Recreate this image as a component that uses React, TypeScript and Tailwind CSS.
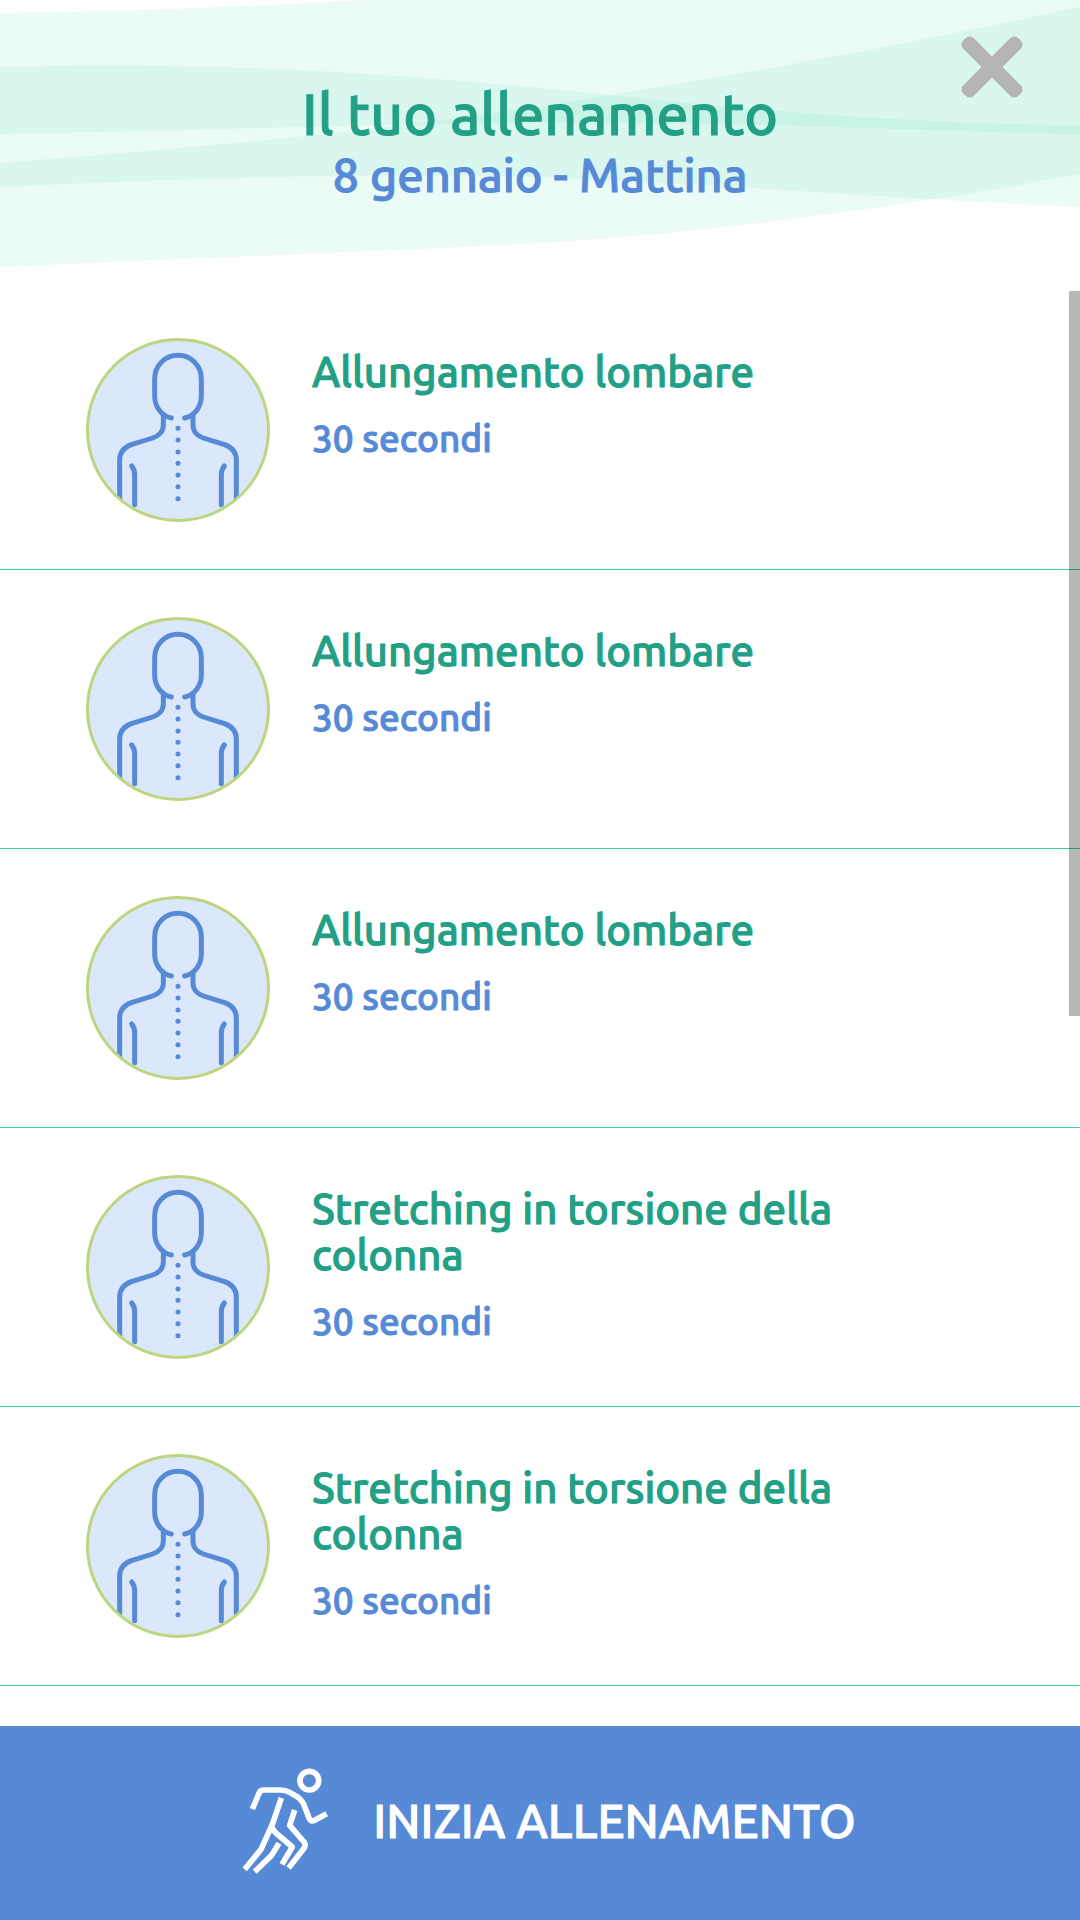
import { useState } from "react";

interface Exercise {
  id: number;
  name: string;
  duration: string;
}

const exercises: Exercise[] = [
  { id: 1, name: "Allungamento lombare", duration: "30 secondi" },
  { id: 2, name: "Allungamento lombare", duration: "30 secondi" },
  { id: 3, name: "Allungamento lombare", duration: "30 secondi" },
  { id: 4, name: "Stretching in torsione della colonna", duration: "30 secondi" },
  { id: 5, name: "Stretching in torsione della colonna", duration: "30 secondi" },
];

// y position of each dot along the spine
const spine = [325, 360, 396, 430, 465, 500, 536];

function Waves() {
  return (
    <svg
      className="absolute inset-x-0 top-0 w-full h-[270px]"
      viewBox="0 0 1080 270"
      preserveAspectRatio="none"
      fill="#3ddcab"
      fillOpacity="0.1"
      aria-hidden="true"
    >
      <path d="M0 13 C115 12 240 7 365 0 H1080 V135 C900 129 720 122 540 122 C360 124 180 131 0 134 Z" />
      <path d="M0 67 C180 62 340 69 540 88 C720 107 900 124 1080 125 V207 C900 199 720 184 540 177 C360 173 180 178 0 187 Z" />
      <path d="M0 163 C180 149 380 132 540 106 C720 79 900 46 1080 7 V174 C900 207 720 232 540 243 C360 253 180 258 0 267 Z" />
    </svg>
  );
}

function CloseIcon() {
  return (
    <svg className="w-16 h-16" viewBox="-32 -32 64 64" fill="#b5b5b5" aria-hidden="true">
      <rect x="-39" y="-7.5" width="78" height="15" rx="5.5" transform="rotate(45)" />
      <rect x="-39" y="-7.5" width="78" height="15" rx="5.5" transform="rotate(-45)" />
    </svg>
  );
}

function BackIcon() {
  return (
    <svg
      className="w-full h-full"
      viewBox="57 63 534 534"
      fill="none"
      stroke="#578ad6"
      strokeWidth="15"
      strokeLinecap="round"
      aria-hidden="true"
    >
      {/* head */}
      <path d="M304 294 C274 288 254 260 254 228 V176 C254 136 286 106 324 106 C362 106 394 136 394 176 V228 C394 260 374 288 344 294" />
      {/* shoulders */}
      <path d="M280 284 V315 C280 334 266 348 248 354 L184 374 C160 383 149 400 149 420 V560" />
      <path d="M369 284 V315 C369 334 382 348 400 354 L464 374 C488 383 499 400 499 420 V560" />
      {/* arms */}
      <path d="M185 438 C191 445 194 454 194 464 V554" />
      <path d="M463 438 C457 445 454 454 454 464 V554" />
      {spine.map((y) => (
        <circle key={y} cx="324" cy={y} r="7.5" fill="#578ad6" stroke="none" />
      ))}
    </svg>
  );
}

function RunnerIcon() {
  return (
    <svg
      className="w-[90px] h-[108px] shrink-0"
      viewBox="66 81 270 324"
      fill="none"
      stroke="currentColor"
      strokeWidth="17"
      strokeLinejoin="round"
      aria-hidden="true"
    >
      <circle cx="271" cy="122" r="28" />
      <path d="M100 207 L120 160 Q124 150 134 150 H184 Q200 150 212 157 L236 171 Q248 180 254 192 L270 234 Q275 246 287 241 L323 221" />
      <path d="M187 174 L164 242 Q160 252 156 262 L126 328 L77 388" />
      <path d="M159 262 Q163 272 172 280 L220 321 L189 373" />
      <path d="M227 210 L212 256 L255 306 Q262 315 255 325 L209 384" />
      <path d="M180 310 L157 347 L107 395" />
    </svg>
  );
}

function ExerciseRow({ exercise }: { exercise: Exercise }) {
  return (
    <li className="flex items-start gap-[42px] pl-[86px] pr-[200px] py-[47px] border-b border-[#3dd09d]">
      <div className="w-[184px] h-[184px] shrink-0 rounded-full overflow-hidden border-[3px] border-[#bcd67f] bg-[#dbe7fa]">
        <BackIcon />
      </div>
      <div className="pt-[11px]">
        <h2 className="text-[42px] leading-[46px] text-[#22a085]">{exercise.name}</h2>
        <p className="mt-6 text-[37px] leading-10 text-[#578ad6]">{exercise.duration}</p>
      </div>
    </li>
  );
}

export default function App() {
  const [open, setOpen] = useState(true);

  if (!open) return null;

  return (
    <div className="flex flex-col h-screen bg-white font-['Ubuntu','Noto_Sans',sans-serif] font-medium [-webkit-text-stroke:1px_currentColor]">
      <header className="relative h-[291px] shrink-0 pt-20 text-center">
        <Waves />
        <div className="relative">
          <h1 className="text-[57px] leading-[68px] text-[#22a085]">Il tuo allenamento</h1>
          <p className="text-[47px] leading-[54px] text-[#578ad6]">8 gennaio - Mattina</p>
        </div>
        <button
          type="button"
          aria-label="Chiudi"
          onClick={() => setOpen(false)}
          className="absolute top-[35px] right-14 cursor-pointer"
        >
          <CloseIcon />
        </button>
      </header>

      <main className="relative flex-1 min-h-0">
        <ul className="h-full overflow-y-auto">
          {exercises.map((exercise) => (
            <ExerciseRow key={exercise.id} exercise={exercise} />
          ))}
        </ul>
        {/* Scroll thumb */}
        <div className="absolute top-0 right-0 w-[11px] h-[725px] bg-black/28" />
      </main>

      <button
        type="button"
        className="flex items-center justify-center gap-[42px] h-[194px] shrink-0 pl-[17px] pb-1 bg-[#578ad6] text-white text-[47px] leading-[52px] cursor-pointer [-webkit-text-stroke:1px_currentColor]"
      >
        <RunnerIcon />
        INIZIA ALLENAMENTO
      </button>
    </div>
  );
}
